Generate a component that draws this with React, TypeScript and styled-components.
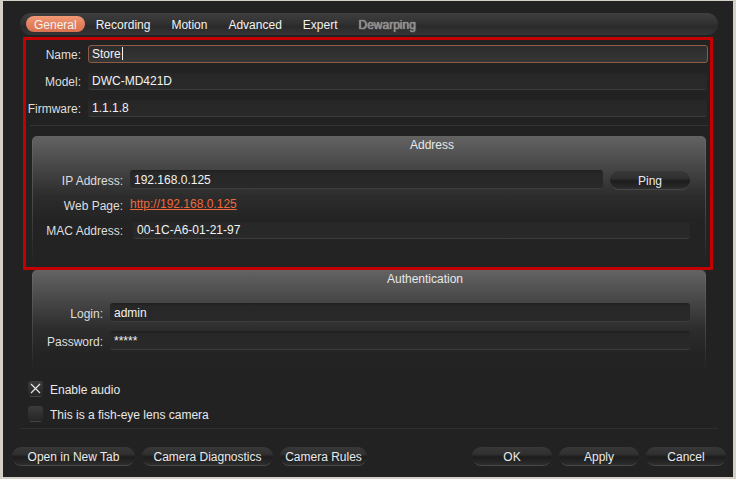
import React from "react";
import styled, { createGlobalStyle } from "styled-components";

const GlobalStyle = createGlobalStyle`
  html, body {
    margin: 0;
    padding: 0;
    background: #d4d0c8;
  }
  * {
    box-sizing: border-box;
  }
`;

const Window = styled.div`
  width: 736px;
  height: 479px;
  border-style: solid;
  border-color: #d4d0c8;
  border-width: 1px 3px 2px 3px;
  background: #222222;
  font-family: "Liberation Sans", Arial, sans-serif;
  font-size: 12px;
  color: #e4e4e4;
  display: flex;
  flex-direction: column;
  overflow: hidden;
`;

const TabBar = styled.div`
  margin: 12px 15px 0 17px;
  height: 22px;
  border-radius: 11px;
  background: linear-gradient(#3e3e3e 0%, #323232 45%, #2a2a2a 60%, #353535 100%);
  display: flex;
  align-items: center;
  gap: 1px;
  padding-left: 6px;
`;

const Tab = styled.div<{ $active?: boolean; $disabled?: boolean }>`
  height: 16px;
  line-height: 18px;
  padding: 0 ${(p) => (p.$active ? 8 : 10)}px;
  border-radius: 8px;
  color: ${(p) => (p.$disabled ? "#8a8a8a" : "#f2f2f2")};
  text-shadow: ${(p) => (p.$disabled ? "0 0 1px #d8d8d8, 1px 1px 0 #3a3a3a" : "none")};
  background: ${(p) =>
    p.$active ? "linear-gradient(#f29a76, #e3805b 55%, #d8734f)" : "transparent"};
`;

const Highlight = styled.section`
  margin: 5px 0 0 23px;
  width: 684px;
  height: 227px;
  outline: 3px solid #c40000;
  display: flex;
  flex-direction: column;
  padding-top: 5px;
`;

const FormRow = styled.div<{ $label: number; $gap?: number }>`
  display: grid;
  grid-template-columns: ${(p) => p.$label}px 1fr;
  column-gap: 7px;
  align-items: center;
  margin-top: ${(p) => p.$gap ?? 0}px;
`;

const Label = styled.div`
  text-align: right;
  color: #dedede;
  white-space: nowrap;
  padding-top: 2px;
`;

const NameInput = styled.div`
  height: 18px;
  margin-right: 2px;
  border: 1px solid #8e5b45;
  border-radius: 3px;
  background: linear-gradient(#2c2c2c, #363636);
  padding-left: 3px;
  line-height: 17px;
  color: #f4f4f4;
`;

const Caret = styled.span`
  display: inline-block;
  width: 1px;
  height: 13px;
  margin-left: 1px;
  vertical-align: -2px;
  background: #f4f4f4;
`;

const Field = styled.div`
  height: 19px;
  line-height: 20px;
  padding-left: 4px;
  border-radius: 3px;
  background: linear-gradient(#1f1f1f 0, #272727 3px, #292929);
  border-bottom: 1px solid #3c3c3c;
  color: #f2f2f2;
  white-space: nowrap;
  overflow: hidden;
`;

const Rule = styled.div`
  margin: 8px 2px 0 4px;
  height: 1px;
  background: #343434;
`;

const Group = styled.div<{ $height: number; $top: number; $left: number }>`
  margin-top: ${(p) => p.$top}px;
  margin-left: ${(p) => p.$left}px;
  width: 674px;
  height: ${(p) => p.$height}px;
  border-radius: 5px 5px 0 0;
  background:
    linear-gradient(#6a6a6a, #474747 55%, transparent) left top / 1px 100% no-repeat,
    linear-gradient(#6a6a6a, #474747 55%, transparent) right top / 1px 100% no-repeat,
    linear-gradient(#636363 0, #4c4c4c 25px, #2c2c2c 60px, #232323 85px);
  display: flex;
  flex-direction: column;
  padding-top: 1px;
`;

const GroupTitle = styled.div<{ $center: number }>`
  height: 16px;
  line-height: 15px;
  padding-top: 1px;
  padding-left: ${(p) => p.$center}px;
  text-align: center;
  color: #e8e8e8;

  span {
    display: inline-block;
    border-bottom: 1px solid #545454;
  }
`;

const GroupRow = styled.div<{ $label: number; $gap: number; $button?: boolean }>`
  display: grid;
  grid-template-columns: ${(p) => p.$label}px 1fr ${(p) => (p.$button ? "80px" : "")};
  column-gap: 7px;
  align-items: center;
  padding-right: 16px;
  margin-top: ${(p) => p.$gap}px;
  min-height: 19px;
`;

const Link = styled.a`
  color: #ee6a3e;
  text-decoration: underline;
  line-height: 21px;
`;

const Button = styled.button<{ $width: number }>`
  width: ${(p) => p.$width}px;
  height: 18px;
  padding: 1px 0 0;
  border: none;
  border-radius: 9px;
  background: linear-gradient(#383838 0%, #303030 40%, #1d1d1d 55%, #252525 80%, #2e2e2e 100%);
  box-shadow: 0 2px 0 -1px #484848;
  color: #eaeaea;
  font-family: "Liberation Sans", Arial, sans-serif;
  font-size: 12px;
  line-height: 18px;
  white-space: nowrap;
`;

const CheckRow = styled.label<{ $top: number }>`
  display: flex;
  align-items: center;
  gap: 7px;
  margin: ${(p) => p.$top}px 0 0 25px;
  height: 16px;
  color: #e8e8e8;

  span:last-child {
    padding-top: 3px;
  }
`;

const CheckBox = styled.span`
  width: 15px;
  height: 15px;
  border-radius: 3px;
  background: linear-gradient(#3c3c3c, #2e2e2e 60%, #262626);
  box-shadow: 0 2px 0 -1px #444;
  display: flex;
  align-items: center;
  justify-content: center;
`;

const Separator = styled.div`
  margin: 7px 15px 0 17px;
  height: 1px;
  background: #2f2f2f;
`;

const Footer = styled.div`
  display: flex;
  margin: 18px 7px 0 9px;
  gap: 7px;
`;

const Spacer = styled.div`
  flex: 1;
`;

const tabs = ["General", "Recording", "Motion", "Advanced", "Expert"];

function Check({ checked, children, top }: { checked?: boolean; children: React.ReactNode; top: number }) {
  return (
    <CheckRow $top={top}>
      <CheckBox>
        {checked && (
          <svg width="11" height="11" viewBox="0 0 11 11">
            <path d="M1 1 L10 10 M10 1 L1 10" stroke="#e6e6e6" strokeWidth="1.2" />
          </svg>
        )}
      </CheckBox>
      <span>{children}</span>
    </CheckRow>
  );
}

export default function App(): React.ReactElement {
  return (
    <>
      <GlobalStyle />
      <Window>
        <TabBar>
          {tabs.map((t, i) => (
            <Tab key={t} $active={i === 0}>
              {t}
            </Tab>
          ))}
          <Tab $disabled>Dewarping</Tab>
        </TabBar>

        <Highlight>
          <FormRow $label={55}>
            <Label>Name:</Label>
            <NameInput>
              Store
              <Caret />
            </NameInput>
          </FormRow>
          <FormRow $label={55} $gap={8}>
            <Label>Model:</Label>
            <Field style={{ marginRight: 3 }}>DWC-MD421D</Field>
          </FormRow>
          <FormRow $label={55} $gap={8}>
            <Label>Firmware:</Label>
            <Field style={{ marginRight: 3 }}>1.1.1.8</Field>
          </FormRow>
          <Rule />

          <Group $top={10} $height={128} $left={6}>
            <GroupTitle $center={126}>
              <span>Address</span>
            </GroupTitle>
            <GroupRow $label={91} $gap={17} $button>
              <Label>IP Address:</Label>
              <Field>192.168.0.125</Field>
              <Button $width={80}>Ping</Button>
            </GroupRow>
            <GroupRow $label={91} $gap={5}>
              <Label>Web Page:</Label>
              <div>
                <Link href="#">http://192.168.0.125</Link>
              </div>
            </GroupRow>
            <GroupRow $label={91} $gap={5}>
              <Label>MAC Address:</Label>
              <Field style={{ marginLeft: 3 }}>00-1C-A6-01-21-97</Field>
            </GroupRow>
          </Group>
        </Highlight>

        <Group $top={3} $height={100} $left={29}>
          <GroupTitle $center={112}>
            <span>Authentication</span>
          </GroupTitle>
          <GroupRow $label={71} $gap={16}>
            <Label>Login:</Label>
            <Field>admin</Field>
          </GroupRow>
          <GroupRow $label={71} $gap={9}>
            <Label>Password:</Label>
            <Field>*****</Field>
          </GroupRow>
        </Group>

        <Check checked top={10}>
          Enable audio
        </Check>
        <Check top={9}>This is a fish-eye lens camera</Check>

        <Separator />

        <Footer>
          <Button $width={123}>Open in New Tab</Button>
          <Button $width={131}>Camera Diagnostics</Button>
          <Button $width={87}>Camera Rules</Button>
          <Spacer />
          <Button $width={80}>OK</Button>
          <Button $width={80}>Apply</Button>
          <Button $width={80}>Cancel</Button>
        </Footer>
      </Window>
    </>
  );
}
